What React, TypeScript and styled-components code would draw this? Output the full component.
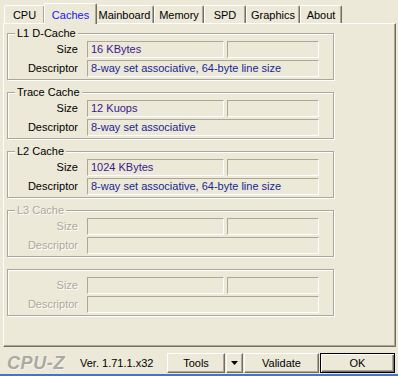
import styled, { createGlobalStyle } from "styled-components";

const GlobalStyle = createGlobalStyle`
    html, body {
        margin: 0;
        padding: 0;
        background: #ece9d8;
    }
    body {
        font-family: "Liberation Sans", Arial, sans-serif;
        font-size: 11px;
    }
`;

const Window = styled.div`
    width: 398px;
    height: 376px;
    box-sizing: border-box;
    display: flex;
    flex-direction: column;
    background: #ece9d8;
    border-bottom: 2px solid #3d74d6;
`;

const TabStrip = styled.div`
    display: flex;
    align-items: flex-end;
    height: 20px;
    margin-top: 3px;
    padding-left: 4px;
    position: relative;
    z-index: 1;
`;

const Tab = styled.div<{ $w: number; $active?: boolean }>`
    width: ${(p) => (p.$active ? p.$w + 3 : p.$w)}px;
    height: ${(p) => (p.$active ? 21 : 18)}px;
    margin: ${(p) => (p.$active ? "0 -2px -1px -1px" : "0")};
    box-sizing: border-box;
    display: flex;
    justify-content: center;
    padding-top: ${(p) => (p.$active ? 5 : 3)}px;
    line-height: 13px;
    background: #ece9d8;
    border-top: 1px solid #fff;
    border-left: 1px solid #fff;
    border-right: 1px solid #716f64;
    border-radius: 2px 2px 0 0;
    box-shadow: inset -1px 0 0 #aca899;
    color: ${(p) => (p.$active ? "#1515f5" : "#000")};
    position: relative;
    z-index: ${(p) => (p.$active ? 2 : 1)};
`;

const Panel = styled.div`
    width: 393px;
    height: 324px;
    margin-left: 3px;
    box-sizing: border-box;
    border-top: 1px solid #fff;
    border-left: 1px solid #fff;
    border-right: 1px solid #716f64;
    border-bottom: 1px solid #716f64;
    box-shadow: inset -1px -1px 0 #aca899;
    padding: 9px 0 0 3px;
    display: flex;
    flex-direction: column;
    gap: 12px;
`;

const Group = styled.div`
    width: 327px;
    height: 47px;
    box-sizing: border-box;
    border: 1px solid #aca899;
    box-shadow: inset 1px 1px 0 #fff, 1px 1px 0 #fff;
    position: relative;
    padding: 7px 0 2px 0;
    display: grid;
    grid-template-columns: 76px 137px 92px;
    grid-auto-rows: 17px;
    column-gap: 3px;
    row-gap: 2px;
`;

const Legend = styled.span<{ $off?: boolean }>`
    position: absolute;
    top: -7px;
    left: 7px;
    padding: 0 2px;
    line-height: 13px;
    background: #ece9d8;
    color: ${(p) => (p.$off ? "#aca899" : "#000")};
    text-shadow: ${(p) => (p.$off ? "1px 1px 0 #fff" : "none")};
`;

const Label = styled.span<{ $off?: boolean }>`
    align-self: center;
    text-align: right;
    padding-right: 6px;
    line-height: 13px;
    color: ${(p) => (p.$off ? "#aca899" : "#000")};
    text-shadow: ${(p) => (p.$off ? "1px 1px 0 #fff" : "none")};
`;

const Field = styled.div<{ $wide?: boolean; $tone?: string }>`
    grid-column: ${(p) => (p.$wide ? "span 2" : "auto")};
    box-sizing: border-box;
    border-top: 1px solid #aca899;
    border-left: 1px solid #aca899;
    border-bottom: 1px solid #fff;
    border-right: 1px solid #fff;
    padding-left: 3px;
    line-height: 15px;
    white-space: nowrap;
    overflow: hidden;
    color: ${(p) => p.$tone || "#1a1f94"};
`;

const BottomBar = styled.div`
    flex: 1;
    display: flex;
    align-items: flex-start;
    padding: 5px 3px 0 7px;
`;

const Logo = styled.span`
    font-size: 18px;
    font-weight: bold;
    font-style: italic;
    letter-spacing: 0.6px;
    line-height: 22px;
    color: #aaa9a2;
    text-shadow: 1px 1px 0 #f4f3ec;
    width: 73px;
`;

const Version = styled.span`
    flex: 1;
    line-height: 22px;
    color: #000;
`;

const Button = styled.button<{ $w: number; $primary?: boolean }>`
    width: ${(p) => p.$w}px;
    height: 20px;
    margin: 1px 0 0 1px;
    box-sizing: border-box;
    padding: 0;
    font-family: "Liberation Sans", Arial, sans-serif;
    font-size: 11px;
    color: #000;
    background: #ece9d8;
    display: flex;
    align-items: center;
    justify-content: center;
    border: 1px solid;
    border-color: ${(p) => (p.$primary ? "#000" : "#fff #716f64 #716f64 #fff")};
    box-shadow: ${(p) =>
        p.$primary
            ? "inset 1px 1px 0 #fff, inset -1px -1px 0 #716f64, inset -2px -2px 0 #aca899"
            : "inset -1px -1px 0 #aca899"};
`;

type Row = { size?: string; desc?: string };

const groups: { title?: string; off?: boolean; data: Row }[] = [
    { title: "L1 D-Cache", data: { size: "16 KBytes", desc: "8-way set associative, 64-byte line size" } },
    { title: "Trace Cache", data: { size: "12 Kuops", desc: "8-way set associative" } },
    { title: "L2 Cache", data: { size: "1024 KBytes", desc: "8-way set associative, 64-byte line size" } },
    { title: "L3 Cache", off: true, data: {} },
    { off: true, data: {} },
];

const tabs = [
    { name: "CPU", w: 41 },
    { name: "Caches", w: 50 },
    { name: "Mainboard", w: 59 },
    { name: "Memory", w: 50 },
    { name: "SPD", w: 42 },
    { name: "Graphics", w: 54 },
    { name: "About", w: 42 },
];

const App = () => {
    return (
        <>
            <GlobalStyle />
            <Window>
                <TabStrip>
                    {tabs.map((t) => (
                        <Tab key={t.name} $w={t.w} $active={t.name === "Caches"}>
                            {t.name}
                        </Tab>
                    ))}
                </TabStrip>
                <Panel>
                    {groups.map((g, i) => (
                        <Group key={i}>
                            {g.title && <Legend $off={g.off}>{g.title}</Legend>}
                            <Label $off={g.off}>Size</Label>
                            <Field $tone="#3a178f">{g.data.size}</Field>
                            <Field />
                            <Label $off={g.off}>Descriptor</Label>
                            <Field $wide>{g.data.desc}</Field>
                        </Group>
                    ))}
                </Panel>
                <BottomBar>
                    <Logo>CPU-Z</Logo>
                    <Version>Ver. 1.71.1.x32</Version>
                    <Button $w={58}>Tools</Button>
                    <Button $w={17}>
                        <svg width="7" height="4" viewBox="0 0 7 4">
                            <path d="M0 0h7L3.5 4z" fill="#000" />
                        </svg>
                    </Button>
                    <Button $w={75}>Validate</Button>
                    <Button $w={75} $primary>OK</Button>
                </BottomBar>
            </Window>
        </>
    );
};

export default App;
